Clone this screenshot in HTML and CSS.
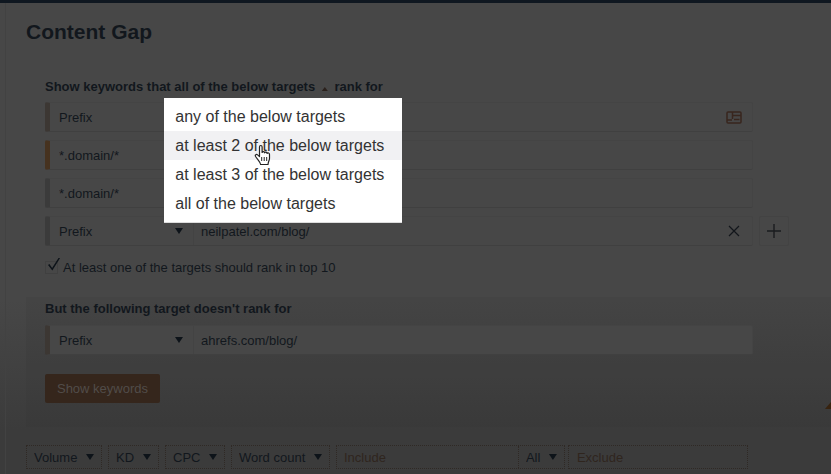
FILE: index.html
```html
<!DOCTYPE html>
<html lang="en">
<head>
  <meta charset="UTF-8" />
  <meta name="viewport" content="width=device-width, initial-scale=1.0"/>
  <title>Content Gap</title>
  <link rel="stylesheet" href="styles.css">
</head>
<body>

  <div class="topbar"></div>

  <main class="main">
    <h1>Content Gap</h1>

    <form class="gap-form">
      <section class="targets">
        <h2>
          Show keywords that
          <span class="mode">
            <button type="button" class="mode-btn" aria-expanded="true">all of the below targets <span class="caret-up"></span></button>
            <span class="menu">
              <button type="button" class="menu-item">any of the below targets</button>
              <button type="button" class="menu-item active">at least 2 of the below targets</button>
              <button type="button" class="menu-item">at least 3 of the below targets</button>
              <button type="button" class="menu-item">all of the below targets</button>
              <svg class="pointer" width="18" height="22" viewBox="0 0 18 22">
                <path d="M5.5 12.5V3c0-2 2.6-2 2.6 0v5.5c.3-1.3 2.4-1.2 2.5.3.5-1.1 2.4-.8 2.5.6.7-.9 2.4-.5 2.4 1.1v3.700c0 2.300-1.300 3.300-1.500 6.300H6.600C6.200 17.600 3.500 15.500 1.600 12.500c-1-1.700.8-2.700 2-1.600z" fill="#fff" stroke="#222" stroke-width="1.200" stroke-linejoin="round"/>
                <path d="M7.700 13v4M10.200 13v4M12.700 13v4" stroke="#222" stroke-width="1"/>
              </svg>
            </span>
          </span>
          rank for
        </h2>

        <div class="row">
          <div class="field sand">
            <span class="select"><select aria-label="Target 1 mode"><option>Prefix</option></select></span>
            <input type="text" aria-label="Target 1">
            <button type="button" class="icon-btn" aria-label="Choose from list">
              <svg width="16" height="13" viewBox="0 0 16 13" fill="none" stroke="#38261e" stroke-width="1.500">
                <rect x="1" y="1" width="14" height="11" rx="1"/>
                <path d="M6.500 1v7M7 4.500h8M8 8.500h5.500M1 9h5"/>
              </svg>
            </button>
          </div>
        </div>
        <div class="row">
          <div class="field orange">
            <span class="select"><select aria-label="Target 2 mode"><option>*.domain/*</option></select></span>
            <input type="text" aria-label="Target 2">
          </div>
        </div>
        <div class="row">
          <div class="field grey">
            <span class="select"><select aria-label="Target 3 mode"><option>*.domain/*</option></select></span>
            <input type="text" aria-label="Target 3">
          </div>
        </div>
        <div class="row">
          <div class="field grey">
            <span class="select"><select aria-label="Target 4 mode"><option>Prefix</option></select></span>
            <input type="text" value="neilpatel.com/blog/" aria-label="Target 4">
            <button type="button" class="icon-btn" aria-label="Remove target">
              <svg width="16" height="12" viewBox="0 0 16 12" fill="none" stroke="#12161b" stroke-width="1.200">
                <path d="M3 1l10 10M13 1L3 11"/>
              </svg>
            </button>
          </div>
          <button type="button" class="add-btn" aria-label="Add target">
            <svg width="14" height="14" viewBox="0 0 14 14" fill="none" stroke="#1a1c1f" stroke-width="1.400">
              <path d="M7 0v14M0 7h14"/>
            </svg>
          </button>
        </div>

        <label class="check"><input type="checkbox" checked> At least one of the targets should rank in top 10</label>
      </section>

      <section class="exclude">
        <h2>But the following target doesn't rank for</h2>
        <div class="row">
          <div class="field sand">
            <span class="select"><select aria-label="Excluded target mode"><option>Prefix</option></select></span>
            <input type="text" value="ahrefs.com/blog/" aria-label="Excluded target">
          </div>
        </div>
        <button type="submit" class="submit">Show keywords</button>
      </section>
    </form>

    <div class="filters">
      <span class="select"><select aria-label="Volume"><option>Volume</option></select></span>
      <span class="select"><select aria-label="KD"><option>KD</option></select></span>
      <span class="select"><select aria-label="CPC"><option>CPC</option></select></span>
      <span class="select"><select aria-label="Word count"><option>Word count</option></select></span>
      <div class="include">
        <input type="text" placeholder="Include" aria-label="Include">
        <span class="select"><select aria-label="Include match"><option>All</option></select></span>
      </div>
      <input class="exclude-words" type="text" placeholder="Exclude" aria-label="Exclude">
    </div>
  </main>

  <div class="corner"></div>

</body>
</html>
```
FILE: styles.css
```css
* {
  box-sizing: border-box;
  margin: 0;
  padding: 0;
}

body {
  position: relative;
  background: #3b3b3b linear-gradient(#474747 300px, #3b3b3b 430px);
  color: #12171d;
  font-family: "Liberation Sans", Arial, sans-serif;
  font-size: 13px;
}

button, input, select {
  font: inherit;
  color: inherit;
  background: none;
  border: none;
  border-radius: 0;
  outline: none;
}

.topbar {
  height: 3px;
  background: #0f1720;
}

.main {
  margin-left: 5px;
  padding: 16px 0 5px 20px;
  border-left: 1px solid #424242;
}

h1 {
  font-size: 21px;
  line-height: 26px;
}

h2 {
  font-size: 13px;
  line-height: 16px;
}

.targets {
  padding: 34px 78px 22px 19px;
}

.targets h2 {
  margin-bottom: 7px;
}

/* dropdown in the heading */
.mode {
  position: relative;
}

.caret-up {
  display: inline-block;
  width: 6px;
  height: 4px;
  margin: 0 3px;
  background: #2b211c;
  clip-path: polygon(50% 0, 100% 100%, 0 100%);
}

.menu {
  position: absolute;
  top: 19px;
  left: -10px;
  z-index: 10;
  width: 238px;
  padding: 4px 0;
  background: #fff;
  border-bottom: 1px solid #ddd;
}

.menu-item {
  display: block;
  width: 100%;
  height: 29px;
  padding: 0 11px;
  color: #333;
  font-size: 16px;
  font-weight: normal;
  text-align: left;
  white-space: nowrap;
}

.menu-item.active {
  background: #f1f1f3;
}

.pointer {
  position: absolute;
  top: 46px;
  left: 90px;
}

/* target rows */
.row {
  display: flex;
  position: relative;
  margin-bottom: 8px;
}

.field {
  display: flex;
  flex: 1;
  height: 30px;
  background: #474747;
  border: 1px solid #444;
  border-bottom-color: #404040;
  border-left: 5px solid #3b3b3b;
  border-radius: 2px;
}

.field.sand {
  border-left-color: #3c3733;
}

.field.orange {
  border-left-color: #46321f;
}

.select {
  position: relative;
  display: flex;
}

.select::after {
  content: "";
  position: absolute;
  top: 50%;
  right: 10px;
  width: 8px;
  height: 6px;
  margin-top: -3px;
  background: #0d1319;
  clip-path: polygon(0 0, 100% 0, 50% 100%);
  pointer-events: none;
}

.select select {
  appearance: none;
  width: 100%;
}

.field .select {
  width: 144px;
  border-right: 1px solid #434343;
}

.field select {
  padding-left: 9px;
}

.field input {
  flex: 1;
  min-width: 0;
  padding: 0 7px;
}

.icon-btn {
  display: flex;
  align-items: center;
  padding: 0 10px;
}

.add-btn {
  position: absolute;
  left: calc(100% + 6px);
  display: flex;
  align-items: center;
  justify-content: center;
  width: 30px;
  height: 30px;
  border: 1px solid #434343;
  border-radius: 2px;
}

.check {
  display: flex;
  align-items: center;
  gap: 5px;
  height: 16px;
  margin-top: 13px;
}

.check input {
  appearance: none;
  position: relative;
  width: 13px;
  height: 13px;
  border: 1px solid #404040;
}

.check input:checked::before {
  content: "";
  position: absolute;
  top: -4px;
  left: 2px;
  width: 12px;
  height: 13px;
  background: #0d1319;
  clip-path: polygon(0 58%, 12% 50%, 34% 80%, 90% 0, 100% 6%, 36% 100%);
}

.exclude {
  padding: 4px 78px 24px 19px;
  background: rgba(0, 0, 0, 0.03);
}

.exclude h2 {
  margin-bottom: 8px;
}

.exclude .row {
  margin-bottom: 19px;
}

.submit {
  width: 115px;
  height: 29px;
  background: #35261c;
  border-radius: 2px;
  color: #514c49;
}

/* filters */
.filters {
  display: flex;
  gap: 6px;
  padding-right: 83px;
  margin-top: 18px;
}

.filters .select, .include, .exclude-words {
  height: 24px;
  border: 1px dotted #2f2925;
}

.filters .select::after {
  right: 7px;
}

.filters select {
  padding: 0 23px 0 7px;
}

.include {
  display: flex;
  flex: 7;
  min-width: 0;
}

.include input {
  flex: 1;
  min-width: 0;
  padding: 0 7px;
}

.include .select {
  height: 22px;
  border-width: 0 0 0 1px;
}

.exclude-words {
  flex: 5;
  min-width: 0;
  margin-left: -3px;
  padding: 0 8px;
}

::placeholder {
  color: #2f251e;
  opacity: 1;
}

.corner {
  position: absolute;
  top: 402px;
  right: 0;
  width: 6px;
  height: 7px;
  background: #38230f;
  clip-path: polygon(100% 0, 100% 100%, 0 100%);
}
```
